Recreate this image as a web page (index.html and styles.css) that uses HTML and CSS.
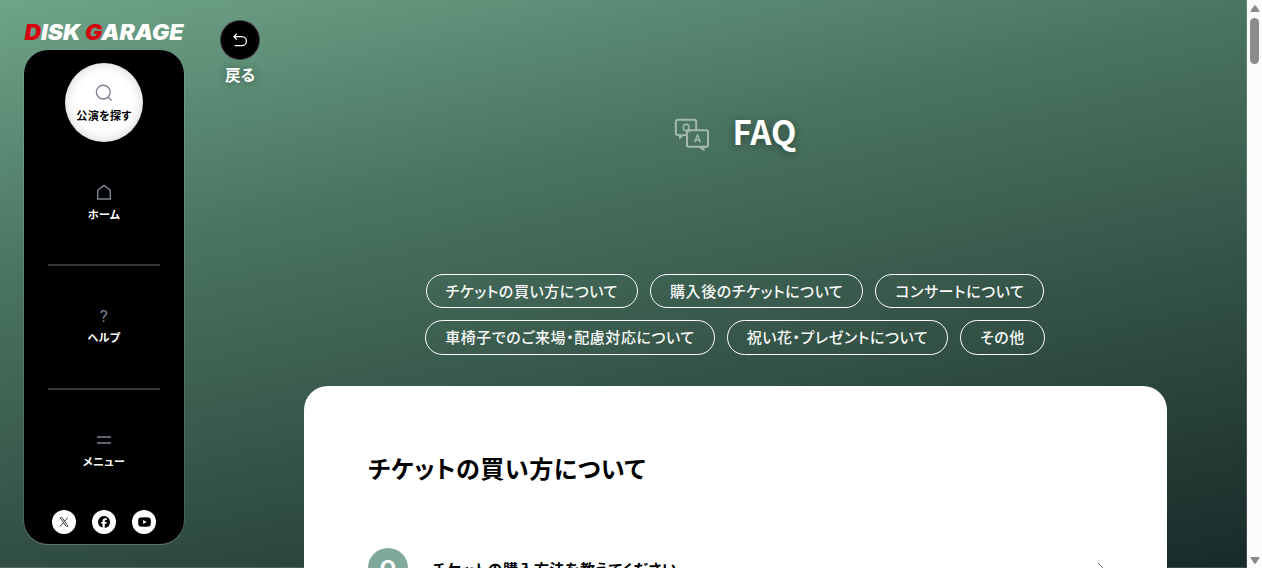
FILE: index.html
```html
<!DOCTYPE html>
<html lang="ja">
<head>
    <meta charset="UTF-8">
    <meta name="viewport" content="width=device-width, initial-scale=1.0">
    <title>FAQ | DISK GARAGE</title>
    <link rel="stylesheet" href="styles.css">
</head>
<body>
    <div class="page">
        <!-- Side navigation -->
        <aside class="sidebar">
            <a class="logo" href="#">
                <svg width="162" height="26" viewBox="0 0 162 26">
                    <text class="logo-text" x="0.500" y="21.700" textLength="159" lengthAdjust="spacingAndGlyphs"><tspan class="logo-red">D</tspan>ISK <tspan class="logo-red">G</tspan>ARAGE</text>
                </svg>
            </a>
            <nav class="nav">
                <a class="search" href="#">
                    <svg width="18" height="18" viewBox="0 0 18 18"><circle cx="8.3" cy="8.1" r="6.9"/><path d="M13 13l3.6 3.6"/></svg>
                    <span>公演を探す</span>
                </a>
                <a class="nav-item nav-home" href="#">
                    <svg width="16" height="16" viewBox="0 0 16 16"><path d="M1.7 6.2L8 1.4l6.300 4.800V15H1.700z"/></svg>
                    <span>ホーム</span>
                </a>
                <a class="nav-item" href="#">
                    <i class="help-icon">?</i>
                    <span>ヘルプ</span>
                </a>
                <a class="nav-item" href="#">
                    <svg width="16" height="16" viewBox="0 0 16 16"><path d="M1 5h14M1 11h14"/></svg>
                    <span>メニュー</span>
                </a>
                <div class="sns">
                    <a href="#"><svg width="10" height="10" viewBox="0 0 24 24"><path d="M14.300 10.200L22.300 1h-1.900l-6.900 8L7.900 1H1.500l8.400 12.100L1.500 23h1.900l7.300-8.600 5.900 8.600H23zM4.100 2.400H7L20.400 21.600h-2.900z"/></svg></a>
                    <a href="#"><svg width="12" height="12" viewBox="0 0 24 24"><path d="M24 12a12 12 0 1 0-14.900 11.700v-8H6.600V12h2.500v-1.600c0-4.100 1.900-6 5.900-6 .8 0 2 .1 2.600.3V8c-.3 0-.8-.1-1.400-.1-2 0-2.700.8-2.700 2.700V12h3.900l-.7 3.700h-3.200v8.200A12 12 0 0 0 24 12z"/></svg></a>
                    <a href="#"><svg width="13" height="10" viewBox="0 0 26 20"><path fill-rule="evenodd" d="M5 1Q13 0 21 1Q25 1.300 25.500 5Q26 10 25.500 15Q25 18.700 21 19Q13 20 5 19Q1 18.700.5 15Q0 10 .5 5Q1 1.300 5 1zM10.300 5.800v8.400l7.200-4.200z"/></svg></a>
                </div>
            </nav>
        </aside>

        <a class="back" href="#">
            <span class="back-icon">
                <svg width="16" height="16" viewBox="0 0 16 16"><path d="M4.800 1.800L2 4.700l2.800 2.900M2 4.700h7.900a4.500 4.500 0 0 1 0 9H2.500"/></svg>
            </span>
            <span class="back-label">戻る</span>
        </a>

        <main>
            <header class="heading">
                <svg width="36" height="34" viewBox="0 0 36 34">
                    <path d="M12.500 17H9l-3 2.500V17H4a2.200 2.200 0 0 1-2.200-2.200V4A2.200 2.200 0 0 1 4 1.800h16A2.200 2.200 0 0 1 22.200 4v8"/>
                    <rect x="13" y="12.300" width="21" height="16.500" rx="1.800"/>
                    <path d="M25.500 29l4 2.500V29"/>
                    <g class="thin"><ellipse cx="12.200" cy="9.500" rx="2.900" ry="3.300"/><path d="M12.800 11.300l3 3M20.500 24.300l3-7.300 3 7.300M21.500 22h4"/></g>
                </svg>
                <h1>FAQ</h1>
            </header>

            <ul class="tags">
                <li><a href="#">チケットの買い方について</a></li>
                <li><a href="#">購入後のチケットについて</a></li>
                <li><a href="#">コンサートについて</a></li>
                <li><a href="#">車椅子でのご来場・配慮対応について</a></li>
                <li><a href="#">祝い花・プレゼントについて</a></li>
                <li><a href="#">その他</a></li>
            </ul>

            <section class="panel">
                <h2>チケットの買い方について</h2>
                <div class="question">
                    <span class="q-mark">Q</span>
                    <p>チケットの購入方法を教えてください。</p>
                    <svg width="14" height="18" viewBox="0 0 14 18"><path d="M3 2l7 7-7 7"/></svg>
                </div>
            </section>
        </main>

        <!-- Scrollbar -->
        <div class="scrollbar">
            <svg width="10" height="8" viewBox="0 0 10 8"><path d="M4 .8Q5-.4 6 .8L9.500 6Q9.500 7 8.500 7h-7Q.5 7 .5 6z"/></svg>
            <div class="thumb"></div>
            <svg class="down" width="10" height="8" viewBox="0 0 10 8"><path d="M4 7.200Q5 8.400 6 7.200L9.500 2Q9.500 1 8.500 1h-7Q.5 1 .5 2z"/></svg>
        </div>
    </div>
</body>
</html>
```
FILE: styles.css
```css
* {
    box-sizing: border-box;
}

body {
    margin: 0;
    overflow: hidden;
    font-family: "Noto Sans CJK JP", sans-serif;
    font-feature-settings: "palt";
    color: #000;
}

a {
    color: inherit;
    text-decoration: none;
}

svg {
    display: block;
    overflow: visible;
    fill: none;
}

.page {
    display: flex;
    height: 568px;
    overflow: hidden;
    background: linear-gradient(168deg, #6ea489 0%, #4a7461 33%, #304d42 68%, #182a28 100%);
    box-shadow: inset 0 -1px #ffffff28;
}

/* Sidebar */
.sidebar {
    width: 160px;
    margin-left: 24px;
    padding-top: 18px;
}

.logo {
    display: block;
    height: 32px;
}

.logo-text {
    font: italic 900 21px Inter, sans-serif;
    fill: #fff;
}

.logo-red {
    fill: #d7000f;
}

.nav {
    display: flex;
    flex-direction: column;
    align-items: center;
    height: 494px;
    padding-top: 13px;
    border-radius: 24px;
    background: #000;
    box-shadow: 0 0.5px 0 0.5px #ffffff38;
    color: #fff;
    font-size: 11px;
    font-weight: 700;
    line-height: 15px;
    letter-spacing: 0.4px;
}

.nav svg {
    stroke: #7b8491;
    stroke-width: 1.4;
}

.search {
    display: flex;
    flex-direction: column;
    align-items: center;
    gap: 6px;
    width: 78px;
    height: 79px;
    padding-top: 21px;
    border-radius: 50%;
    background: #fff;
    box-shadow: inset 0 0 12px #00000030;
    color: #000;
}

.nav-item {
    display: flex;
    flex-direction: column;
    align-items: center;
    gap: 6px;
    width: 112px;
    height: 124px;
    padding-top: 42px;
    border-bottom: 2px solid #33373d;
}

.nav-home {
    gap: 7px;
}

.nav-item:nth-of-type(4) {
    height: 118px;
    border-bottom: 0;
}

.help-icon {
    height: 16px;
    color: #7b8491;
    font: 400 17px/16px Roboto, sans-serif;
}

.sns {
    display: flex;
    gap: 16px;
    margin-top: 2px;
}

.sns a {
    display: flex;
    align-items: center;
    justify-content: center;
    width: 24px;
    height: 24px;
    border-radius: 50%;
    background: #fff;
}

.sns svg {
    fill: #000;
    stroke: none;
}

/* Back button */
.back {
    display: flex;
    flex-direction: column;
    align-items: center;
    width: 40px;
    margin: 20px 0 0 36px;
    color: #fff;
}

.back-icon {
    display: flex;
    align-items: center;
    justify-content: center;
    width: 40px;
    height: 40px;
    border: 1px solid #ffffff40;
    border-radius: 50%;
    background: #000;
}

.back-icon svg {
    stroke: #fff;
    stroke-width: 1.3;
}

.back-label {
    margin-top: 3px;
    font-size: 15.500px;
    font-weight: 700;
    line-height: 22px;
    text-shadow: 0 0 8px #00000060;
}

/* Main column */
main {
    flex: 1;
    margin: 0 80px 0 44px;
}

.heading {
    display: flex;
    align-items: center;
    justify-content: center;
    gap: 22px;
    height: 274px;
    padding-bottom: 5px;
}

.heading svg {
    stroke: #a3b9b0;
    stroke-width: 2;
}

.heading .thin {
    stroke-width: 1.4;
}

h1 {
    margin: 0 0 8px;
    color: #fff;
    font-size: 33px;
    line-height: 50px;
    text-shadow: 0 2px 8px #00000060;
}

.tags {
    display: flex;
    flex-wrap: wrap;
    justify-content: center;
    gap: 12px;
    margin: 0 auto;
    padding: 0 1px 0 0;
    width: 661px;
    list-style: none;
}

.tags a {
    display: block;
    height: 34.400px;
    padding: 0 19px;
    border: 1px solid #fff;
    border-radius: 18px;
    color: #f7faf8;
    font-size: 15px;
    font-weight: 500;
    line-height: 32px;
    letter-spacing: 0.56px;
}

.panel {
    height: 400px;
    margin-top: 31.200px;
    padding: 64px;
    border-radius: 24px;
    background: #fff;
}

h2 {
    margin: 0;
    font-size: 24px;
    line-height: 36px;
    letter-spacing: 0.6px;
}

.question {
    display: flex;
    align-items: center;
    margin-top: 62px;
}

.q-mark {
    width: 40px;
    height: 40px;
    border-radius: 50%;
    background: #80a99b;
    color: #fff;
    font-size: 22px;
    font-weight: 700;
    line-height: 38px;
    text-align: center;
}

.question p {
    flex: 1;
    margin: 1px 0 0 24px;
    font-size: 15px;
    font-weight: 700;
    letter-spacing: 0.520px;
}

.question svg {
    margin: 5px -6px 0 0;
    stroke: #68717a;
}

/* Scrollbar */
.scrollbar {
    display: flex;
    flex-direction: column;
    align-items: center;
    width: 15px;
    padding: 5px 0 4px;
    background: #fcfcfc;
    box-shadow: -1px 0 #ffffff28;
}

.scrollbar svg {
    fill: #8b8b8b;
}

.thumb {
    width: 9px;
    height: 46px;
    margin-top: 5px;
    border-radius: 5px;
    background: #8b8b8b;
}

.scrollbar .down {
    margin-top: auto;
}
```
